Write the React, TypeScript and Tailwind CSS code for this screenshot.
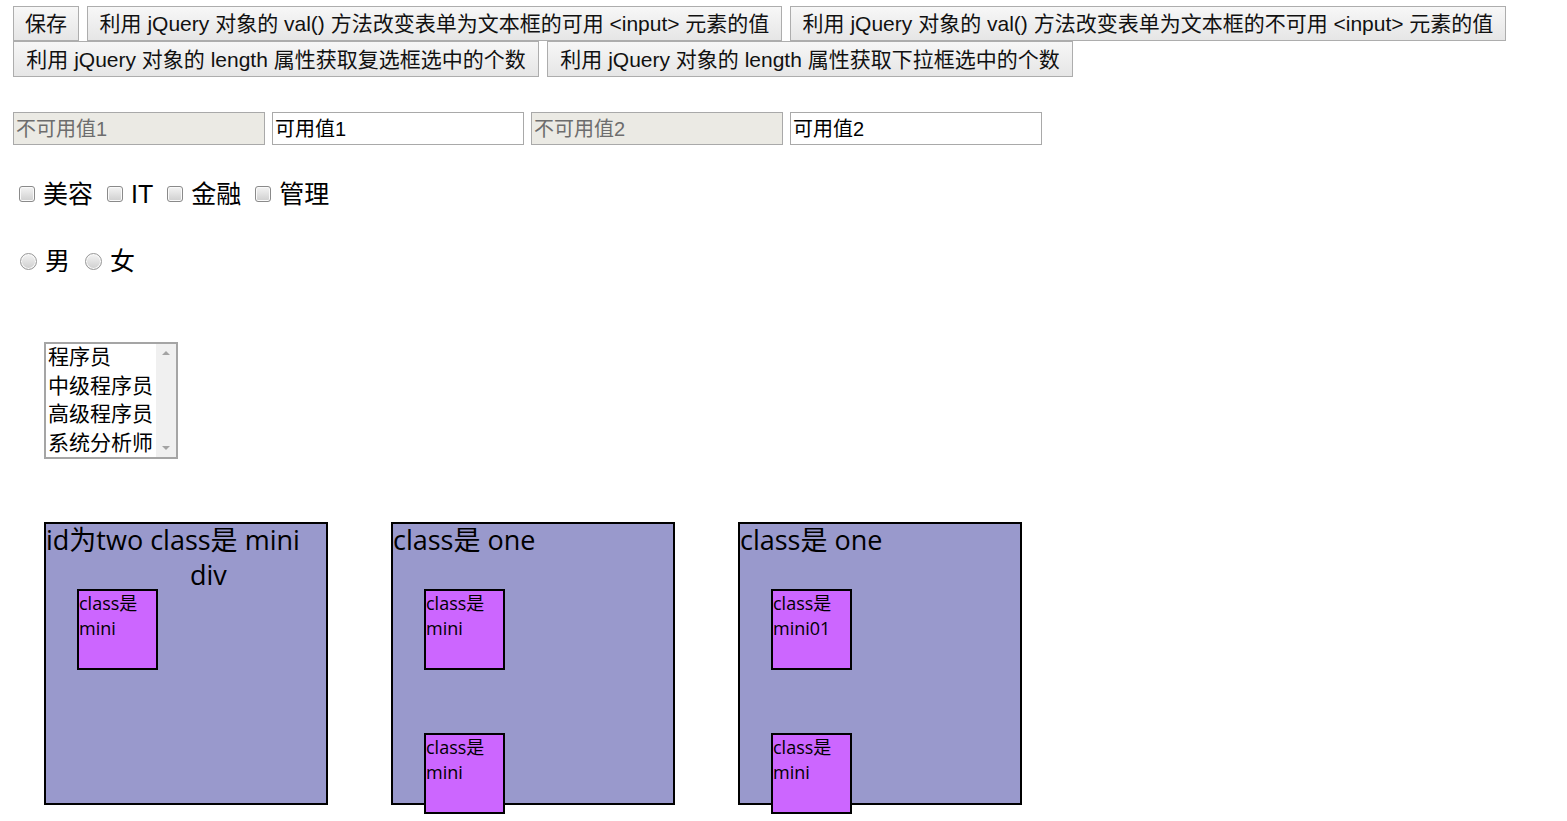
import React from "react";

const btn =
  "h-[35px] shrink-0 whitespace-nowrap border border-[#adadad] bg-linear-to-b from-[#f7f7f7] to-[#e6e6e6] text-[21px] leading-none text-[#111] flex items-center justify-center";

function Check({ label }: { label: string }) {
  return (
    <div className="flex items-center">
      <span className="block w-[16px] h-[16px] rounded-[3px] border border-[#8a8a8a] bg-linear-to-b from-[#f4f4f4] to-[#cfcfcf] shadow-[inset_0_0_0_1px_#fafafa]" />
      <span className="ml-[8px] text-[25px] leading-none">{label}</span>
    </div>
  );
}

function Radio({ label }: { label: string }) {
  return (
    <div className="flex items-center">
      <span className="block w-[17px] h-[17px] rounded-full border border-[#989898] bg-linear-to-b from-[#f4f4f4] to-[#cecece] shadow-[inset_0_0_0_1px_#fafafa]" />
      <span className="ml-[8px] text-[25px] leading-none">{label}</span>
    </div>
  );
}

function Mini({ text, className = "" }: { text: string; className?: string }) {
  return (
    <div
      className={
        "w-[81px] h-[81px] ml-[31px] border-2 border-black bg-[#cc66ff] text-[18px] leading-[25px] text-black break-words " +
        className
      }
    >
      {text}
    </div>
  );
}

export default function App() {
  return (
    <div
      className="bg-white text-black w-[1567px] h-[821px] overflow-hidden"
      style={{ fontFamily: '"Liberation Sans", "Noto Sans CJK SC", sans-serif' }}
    >
      <div className="pl-[13px] pt-[6px]">
        <div className="flex gap-[8px]">
          <button className={btn + " w-[66px]"}>保存</button>
          <button className={btn + " w-[695px]"}>
            利用 jQuery 对象的 val() 方法改变表单为文本框的可用 &lt;input&gt; 元素的值
          </button>
          <button className={btn + " w-[716px]"}>
            利用 jQuery 对象的 val() 方法改变表单为文本框的不可用 &lt;input&gt; 元素的值
          </button>
        </div>
        <div className="flex gap-[8px]">
          <button className={btn + " w-[526px] h-[36px]"}>
            利用 jQuery 对象的 length 属性获取复选框选中的个数
          </button>
          <button className={btn + " w-[526px] h-[36px]"}>
            利用 jQuery 对象的 length 属性获取下拉框选中的个数
          </button>
        </div>

        <div className="flex gap-[7px] mt-[35px]">
          <div className="w-[252px] h-[33px] border border-[#a9a9a9] bg-[#ebeae4] text-[#6d6d6d] text-[20px] flex items-center pl-[2px]">
            不可用值1
          </div>
          <div className="w-[252px] h-[33px] border border-[#a9a9a9] bg-white text-black text-[20px] flex items-center pl-[2px]">
            可用值1
          </div>
          <div className="w-[252px] h-[33px] border border-[#a9a9a9] bg-[#ebeae4] text-[#6d6d6d] text-[20px] flex items-center pl-[2px]">
            不可用值2
          </div>
          <div className="w-[252px] h-[33px] border border-[#a9a9a9] bg-white text-black text-[20px] flex items-center pl-[2px]">
            可用值2
          </div>
        </div>

        <div className="flex items-center h-[30px] mt-[34px] pl-[6px] gap-[14px]">
          <Check label="美容" />
          <Check label="IT" />
          <Check label="金融" />
          <Check label="管理" />
        </div>

        <div className="flex items-center h-[30px] mt-[37px] pl-[7px] gap-[15px]">
          <Radio label="男" />
          <Radio label="女" />
        </div>

        <div className="ml-[31px] mt-[66px] w-[134px] h-[117px] border-2 border-[#a5a5a5] flex bg-white">
          <div className="flex-1 pl-[2px] -mt-[1px] text-[21px] leading-[28.7px] text-black whitespace-nowrap overflow-hidden">
            <div>程序员</div>
            <div>中级程序员</div>
            <div>高级程序员</div>
            <div>系统分析师</div>
          </div>
          <div className="w-[20px] bg-[#f0f0f0] flex flex-col justify-between items-center py-[7px]">
            <span className="w-0 h-0 border-l-[4px] border-r-[4px] border-b-[4px] border-l-transparent border-r-transparent border-b-[#a3a3a3]" />
            <span className="w-0 h-0 border-l-[4px] border-r-[4px] border-t-[4px] border-l-transparent border-r-transparent border-t-[#a3a3a3]" />
          </div>
        </div>

        <div
          className="flex gap-[63px] ml-[31px] mt-[63px]"
          style={{ fontFamily: '"Open Sans", "Noto Sans CJK SC", sans-serif' }}
        >
          <div className="w-[284px] h-[283px] border-2 border-black bg-[#9999cc] shrink-0">
            <div className="h-[65px] flex flex-col text-[27px] leading-[35px] text-black whitespace-nowrap">
              <div className="-mt-[2px]">id为two class是 mini</div>
              <div className="pl-[144px]">div</div>
            </div>
            <Mini text="class是 mini" />
          </div>
          <div className="w-[284px] h-[283px] border-2 border-black bg-[#9999cc] shrink-0">
            <div className="h-[65px] flex flex-col text-[27px] leading-[35px] text-black whitespace-nowrap">
              <div className="-mt-[2px]">class是 one</div>
            </div>
            <Mini text="class是 mini" />
            <Mini text="class是 mini" className="mt-[63px]" />
          </div>
          <div className="w-[284px] h-[283px] border-2 border-black bg-[#9999cc] shrink-0">
            <div className="h-[65px] flex flex-col text-[27px] leading-[35px] text-black whitespace-nowrap">
              <div className="-mt-[2px]">class是 one</div>
            </div>
            <Mini text="class是 mini01" />
            <Mini text="class是 mini" className="mt-[63px]" />
          </div>
        </div>
      </div>
    </div>
  );
}
